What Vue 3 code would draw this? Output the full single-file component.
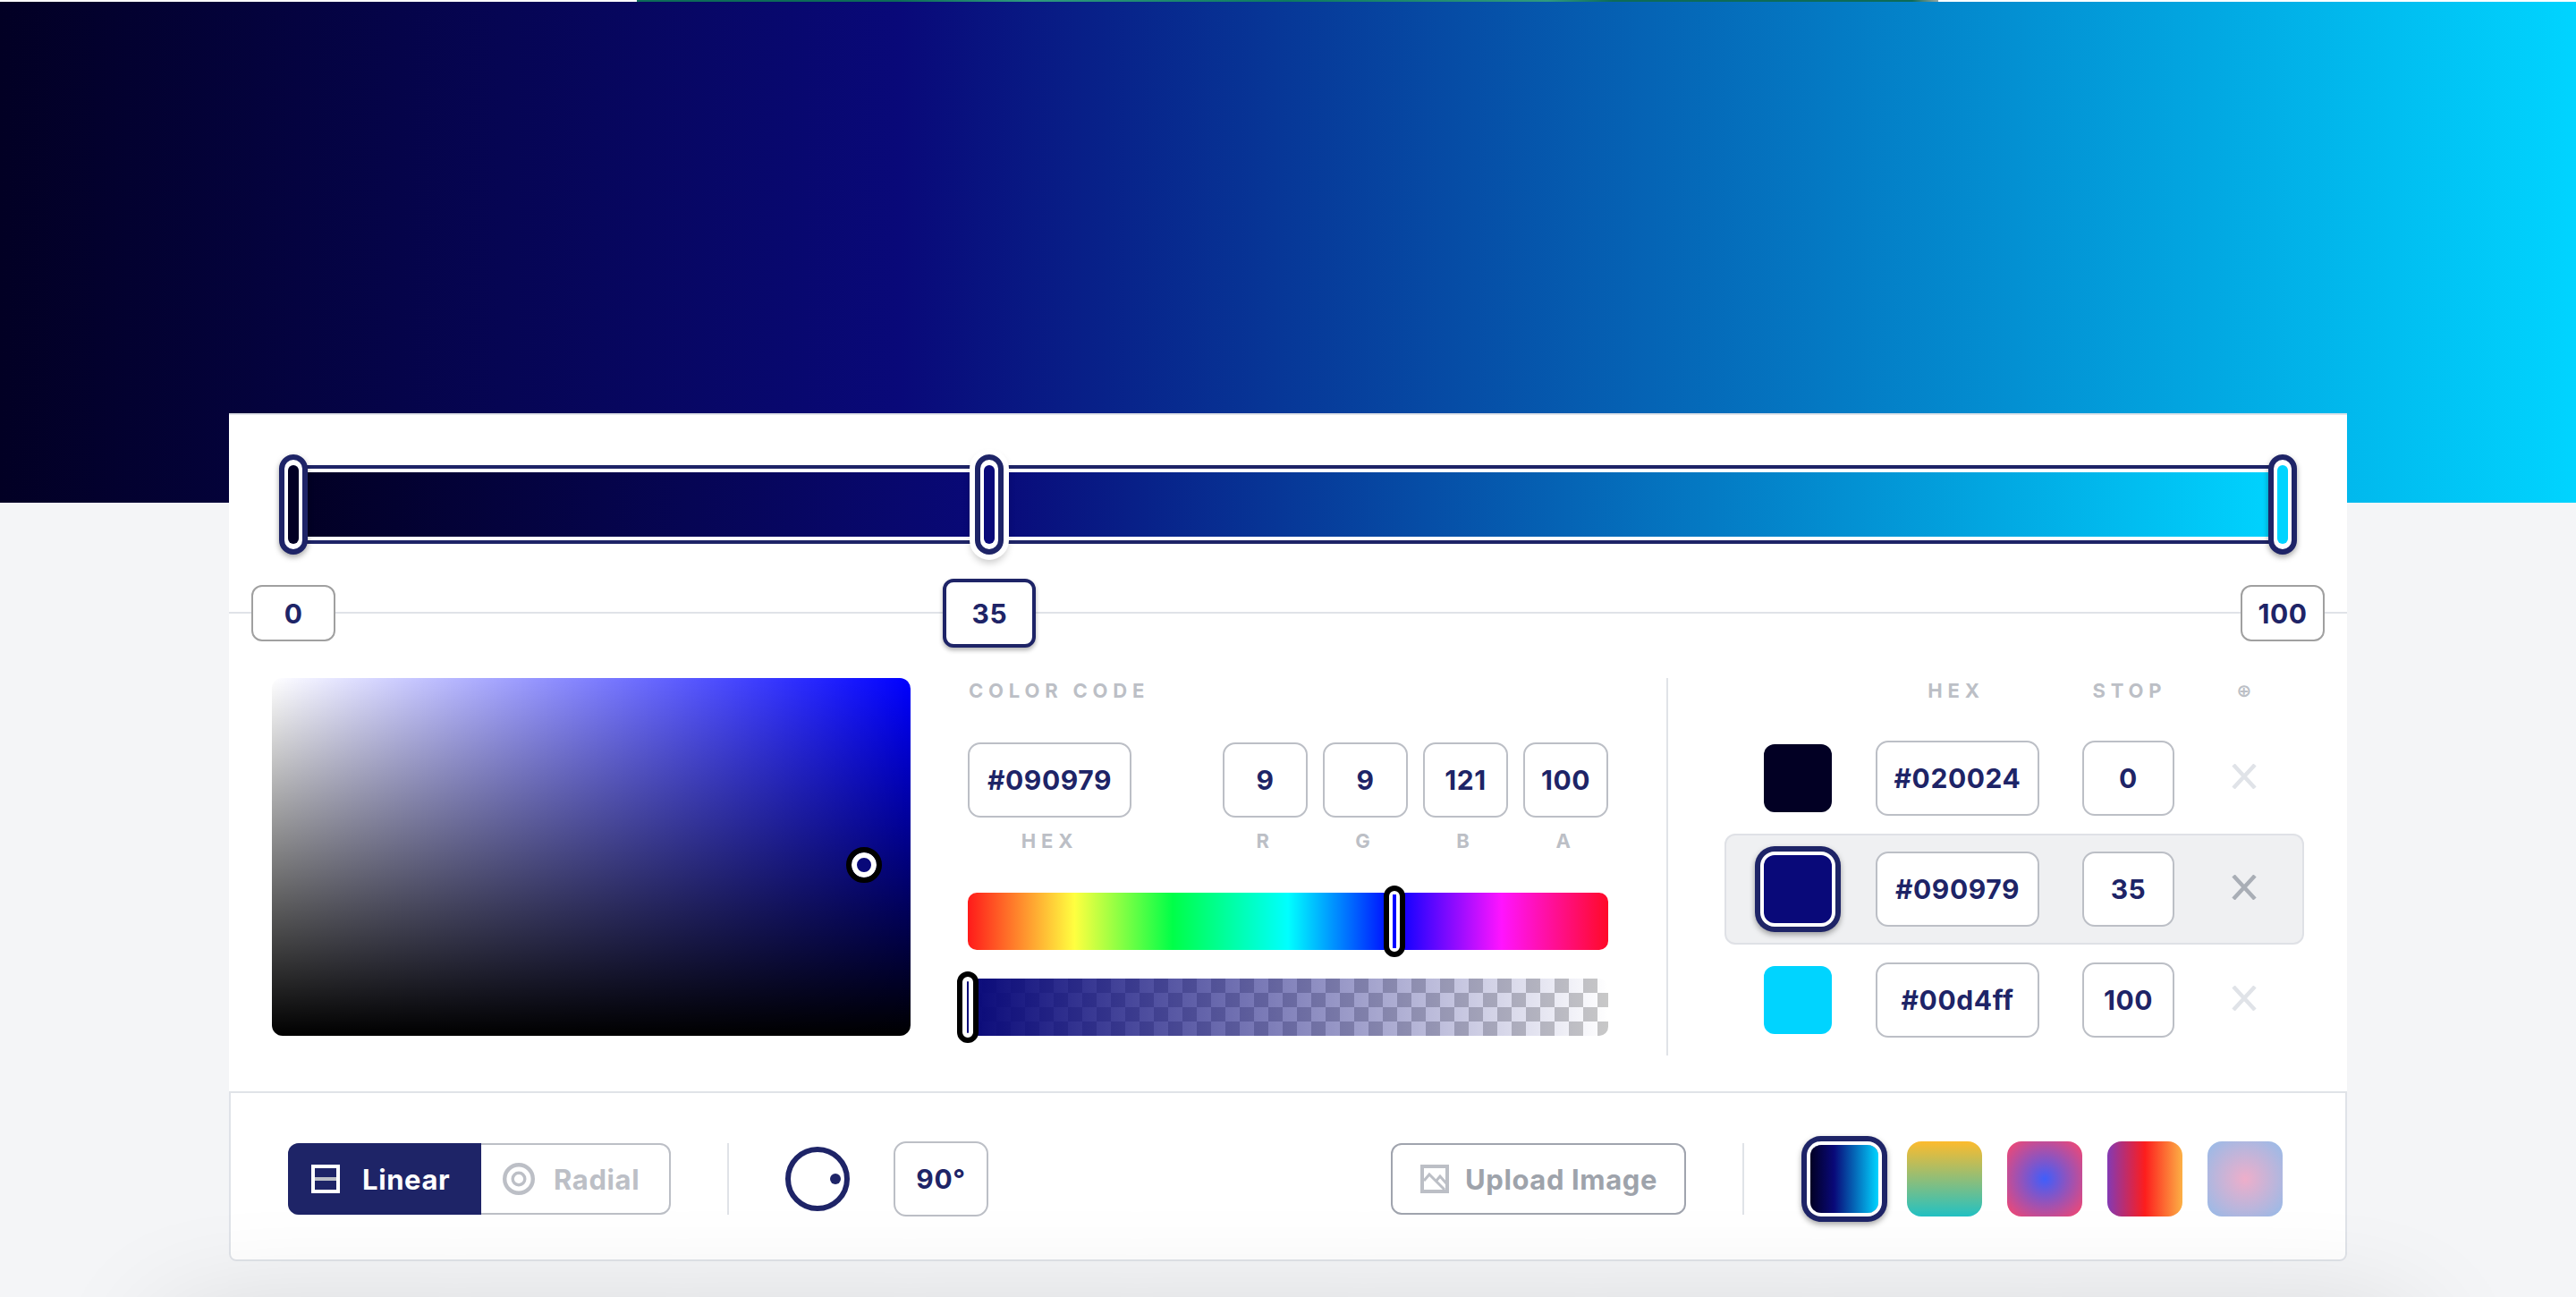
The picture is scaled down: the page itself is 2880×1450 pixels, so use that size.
<script setup>
const stops = [
  { pos: 0, color: '#020024', hex: '#020024', active: false },
  { pos: 35, color: '#090979', hex: '#090979', active: true },
  { pos: 100, color: '#00d4ff', hex: '#00d4ff', active: false }
]
const channels = [
  { label: 'R', value: 9 },
  { label: 'G', value: 9 },
  { label: 'B', value: 121 },
  { label: 'A', value: 100 }
]
const presets = [
  { bg: 'linear-gradient(90deg,#020024 0%,#090979 35%,#00d4ff 100%)', active: true },
  { bg: 'linear-gradient(0deg,#22c1c3 0%,#fdbb2d 100%)', active: false },
  { bg: 'radial-gradient(circle,#3f5efb 0%,#fc466b 100%)', active: false },
  { bg: 'linear-gradient(90deg,#833ab4 0%,#fd1d1d 50%,#fcb045 100%)', active: false },
  { bg: 'radial-gradient(circle,#eeaeca 0%,#94bbe9 100%)', active: false }
]
</script>

<template>
  <div class="page">
    <div class="hero">
      <div class="peek"></div>
    </div>
    <main class="card">
      <section class="track-area">
        <div class="track">
          <span
            v-for="s in stops"
            :key="s.pos"
            class="thumb"
            :class="{ on: s.active }"
            :style="{ left: 'calc(-4px + (100% + 8px) * ' + s.pos / 100 + ')' }"
          ><i :style="{ background: s.color }"></i></span>
        </div>
      </section>

      <section class="ruler">
        <span
          v-for="s in stops"
          :key="s.pos"
          class="chip"
          :class="{ on: s.active }"
          :style="{ left: 'calc(72px + (100% - 144px) * ' + s.pos / 100 + ')' }"
        >{{ s.pos }}</span>
      </section>

      <section class="editor">
        <div class="sv">
          <span class="sv-dot"></span>
        </div>

        <div class="code">
          <div class="label title">COLOR CODE</div>
          <div class="fields">
            <div class="field hex-field">
              <div class="box">#090979</div>
              <div class="label">HEX</div>
            </div>
            <div class="rgba">
              <div v-for="c in channels" :key="c.label" class="field">
                <div class="box num">{{ c.value }}</div>
                <div class="label">{{ c.label }}</div>
              </div>
            </div>
          </div>
          <div class="hue">
            <span class="slide hue-slide"><i></i></span>
          </div>
          <div class="alpha">
            <div class="alpha-fill"></div>
            <span class="slide alpha-slide"><i></i></span>
          </div>
        </div>

        <div class="table">
          <div class="thead">
            <span class="label th-hex">HEX</span>
            <span class="label th-stop">STOP</span>
            <span class="label th-add">⊕</span>
          </div>
          <div v-for="s in stops" :key="s.pos" class="row" :class="{ on: s.active }">
            <span class="swatch" :style="{ background: s.color }"></span>
            <div class="box cell-hex">{{ s.hex }}</div>
            <div class="box cell-stop">{{ s.pos }}</div>
            <svg class="x" viewBox="0 0 28 28" width="28" height="28">
              <path d="M2 1 26 27M26 1 2 27" fill="none" stroke="currentColor" stroke-width="4.5" />
            </svg>
          </div>
        </div>
      </section>

      <footer class="foot">
        <div class="toggle">
          <div class="tab active">
            <svg viewBox="0 0 32 32" width="32" height="32">
              <rect x="2" y="2" width="28" height="28" fill="none" stroke="#fff" stroke-width="4" />
              <rect x="4" y="14" width="24" height="4" fill="#bcbfc6" />
            </svg>
            <span>Linear</span>
          </div>
          <div class="tab">
            <svg viewBox="0 0 36 36" width="36" height="36">
              <circle cx="18" cy="18" r="15.8" fill="none" stroke="#bcbfc6" stroke-width="4.4" />
              <circle cx="18" cy="18" r="6.8" fill="none" stroke="#bcbfc6" stroke-width="3.4" />
            </svg>
            <span>Radial</span>
          </div>
        </div>
        <div class="vline first"></div>
        <div class="dial"><i></i></div>
        <div class="box angle">90°</div>
        <div class="upload">
          <svg viewBox="0 0 32 32" width="32" height="32">
            <rect x="2" y="2" width="28" height="28" fill="none" stroke="#bcbfc6" stroke-width="4" />
            <path d="M4 18 10 11 27 28M17 19 22 13 29 21" fill="none" stroke="#bcbfc6" stroke-width="3" />
          </svg>
          <span>Upload Image</span>
        </div>
        <div class="vline second"></div>
        <div class="presets">
          <span
            v-for="(p, i) in presets"
            :key="i"
            class="preset"
            :class="{ on: p.active }"
            :style="{ background: p.bg }"
          ></span>
        </div>
      </footer>
    </main>
    <div class="next-shadow"></div>
  </div>
</template>

<style>
html, body { margin: 0; background: #f4f5f7; }
</style>

<style scoped>
.page {
  position: relative;
  width: 2880px;
  height: 1450px;
  overflow: hidden;
  background: #f4f5f7;
  font-family: Inter, "Liberation Sans", sans-serif;
  color: #1e2467;
}
.hero {
  position: relative;
  height: 562px;
  background: linear-gradient(90deg, #020024 0%, #090979 35%, #00d4ff 100%);
}
.hero::before {
  content: "";
  display: block;
  height: 2px;
  background: #fff;
}
.peek {
  position: absolute;
  top: 0;
  left: 712px;
  width: 1455px;
  height: 2px;
  background: linear-gradient(90deg, #0d6b58 0%, #0d6b58 20%, #2f9a7f 30%, #0d7a60 50%, #2f9a7f 70%, #0d6b58 75%, #0d6b58 98%, #9aa5a0 100%);
}
.next-shadow {
  position: absolute;
  left: 190px;
  top: 1490px;
  width: 2500px;
  height: 100px;
  box-shadow: 0 0 140px rgba(0, 0, 0, 0.2);
  pointer-events: none;
}
.card {
  position: relative;
  box-sizing: border-box;
  width: 2368px;
  margin: -100px auto 0;
  background: #fff;
  border-top: 2px solid #e0e3e8;
  border-radius: 0 0 8px 8px;
}
.track-area {
  box-sizing: border-box;
  height: 142px;
  padding: 56px 72px 0;
}
.track {
  position: relative;
  box-sizing: border-box;
  height: 88px;
  padding: 4px 0;
  border: 4px solid #1e2467;
  background: linear-gradient(90deg, #020024 0%, #090979 35%, #00d4ff 100%) content-box;
}
.thumb {
  position: absolute;
  top: -16px;
  box-sizing: border-box;
  width: 32px;
  height: 112px;
  margin-left: -16px;
  border: 6px solid #1e2467;
  border-radius: 16px;
  background: #fff;
  box-shadow: 0 3px 6px rgba(0, 0, 0, 0.35);
  display: flex;
  align-items: center;
  justify-content: center;
}
.thumb.on {
  box-shadow: 0 0 0 6px #fff, 0 5px 8px 4px rgba(0, 0, 0, 0.22);
}
.thumb i {
  display: block;
  width: 12px;
  height: 88px;
  border-radius: 6px;
}
.ruler {
  position: relative;
  height: 2px;
  margin-top: 78px;
  background: #e0e3e8;
}
.chip {
  position: absolute;
  top: -30px;
  box-sizing: border-box;
  min-width: 94px;
  height: 63px;
  padding: 0 12px;
  transform: translateX(-50%);
  border: 2px solid #a0a0a0;
  border-radius: 12px;
  background: #fff;
  font-size: 30px;
  font-weight: 700;
  letter-spacing: 0.5px;
  display: flex;
  align-items: center;
  justify-content: center;
}
.chip.on {
  top: -37px;
  width: 104px;
  height: 77px;
  border: 4px solid #1e2467;
  box-shadow: 0 3px 5px rgba(0, 0, 0, 0.3);
}
.editor {
  display: flex;
  height: 422px;
  margin-top: 72px;
  padding-left: 48px;
}
.sv {
  position: relative;
  flex: none;
  width: 714px;
  height: 400px;
  border-radius: 12px;
  background:
    linear-gradient(to top, #000, rgba(0, 0, 0, 0)),
    linear-gradient(to right, #fff, rgba(255, 255, 255, 0)),
    #0000ff;
}
.sv-dot {
  position: absolute;
  left: 642px;
  top: 189px;
  box-sizing: border-box;
  width: 40px;
  height: 40px;
  border-radius: 50%;
  background: #090979;
  border: 6px solid #000;
  box-shadow: inset 0 0 0 6px #fff;
}
.label {
  font-size: 22px;
  line-height: 28px;
  font-weight: 700;
  letter-spacing: 5.8px;
  color: #bcbfc6;
  text-align: center;
}
.box {
  box-sizing: border-box;
  height: 84px;
  border: 2px solid #bcbfc6;
  border-radius: 14px;
  background: #fff;
  font-size: 30px;
  font-weight: 700;
  letter-spacing: 0.6px;
  color: #1e2467;
  display: flex;
  align-items: center;
  justify-content: center;
}
.code {
  flex: none;
  width: 716px;
  margin-left: 64px;
}
.title {
  text-align: left;
  height: 72px;
  margin-left: 1px;
}
.fields {
  display: flex;
  justify-content: space-between;
  height: 168px;
}
.hex-field {
  width: 183px;
}
.field .label {
  margin-top: 12px;
}
.rgba {
  display: flex;
  gap: 17px;
}
.rgba .field {
  width: 95px;
}
.hue {
  position: relative;
  height: 64px;
  border-radius: 10px;
  background: linear-gradient(90deg, #ff1a1a 0%, #ffff40 16.67%, #00ff48 32%, #00ffff 50%, #0000ff 66.67%, #ff14ff 83.33%, #ff0a28 100%);
}
.alpha {
  position: relative;
  height: 64px;
  margin-top: 32px;
  border-radius: 10px;
  background: repeating-conic-gradient(#c8c8c8 0 25%, #fff 0 50%) 0 0 / 32px 32px;
}
.alpha-fill {
  height: 100%;
  border-radius: 10px;
  background: linear-gradient(90deg, #090979, rgba(9, 9, 121, 0));
}
.slide {
  position: absolute;
  top: -8px;
  box-sizing: border-box;
  width: 24px;
  height: 80px;
  margin-left: -12px;
  border: 6px solid #000;
  border-radius: 12px;
  background: #fff;
  display: flex;
  align-items: center;
  justify-content: center;
}
.hue-slide { left: 66.67%; }
.alpha-slide { left: 0; }
.hue-slide i {
  display: block;
  width: 4px;
  height: 60px;
  background: #0000ff;
}
.alpha-slide i {
  display: block;
  width: 2px;
  height: 58px;
  border-radius: 2px;
  background: #090979;
}
.table {
  flex: 1;
  margin-left: 65px;
  padding-left: 2px;
  border-left: 2px solid #e0e3e8;
}
.thead {
  position: relative;
  height: 50px;
}
.thead .label {
  position: absolute;
  top: 0;
  transform: translateX(-50%);
}
.th-hex { left: 320px; }
.th-stop { left: 514px; }
.th-add {
  left: 642px;
  font-family: "DejaVu Sans", sans-serif;
  font-size: 20px;
  letter-spacing: 0;
  font-weight: 700;
}
.row {
  box-sizing: border-box;
  display: flex;
  align-items: center;
  width: 648px;
  height: 124px;
  margin-left: 61px;
  color: #e0e3e8;
  border: 2px solid transparent;
  border-radius: 12px;
}
.row.on {
  background: #eff0f2;
  border-color: #dfe1e6;
  color: #a9aeb6;
}
.swatch {
  flex: none;
  width: 76px;
  height: 76px;
  margin-left: 42px;
  border-radius: 12px;
}
.row.on .swatch {
  box-shadow: 0 0 0 4px #fff, 0 0 0 10px #1e2467, 0 3px 6px 10px rgba(0, 0, 0, 0.35);
}
.cell-hex {
  flex: none;
  width: 183px;
  margin-left: 49px;
}
.cell-stop {
  flex: none;
  width: 103px;
  margin-left: 48px;
}
.x {
  flex: none;
  margin-left: 64px;
  margin-top: -4px;
}
.foot {
  box-sizing: border-box;
  height: 190px;
  margin-top: 40px;
  padding: 6px 0 0 64px;
  display: flex;
  align-items: center;
  border: 2px solid #e0e3e8;
  border-radius: 0 0 8px 8px;
  background: #fff;
}
.toggle {
  display: flex;
  box-sizing: border-box;
  width: 428px;
  height: 80px;
  border: 2px solid #bcbfc6;
  border-radius: 12px;
}
.tab {
  flex: 1;
  display: flex;
  align-items: center;
  gap: 21px;
  padding-left: 24px;
  font-size: 31px;
  font-weight: 700;
  letter-spacing: 0.6px;
  color: #bcbfc6;
}
.tab.active {
  flex: none;
  box-sizing: border-box;
  width: 216px;
  margin: -2px 0 -2px -2px;
  padding-left: 26px;
  gap: 25px;
  border-radius: 12px 0 0 12px;
  background: #1e2467;
  color: #fff;
}
.vline {
  flex: none;
  width: 2px;
  height: 80px;
  background: #e0e3e8;
}
.vline.first { margin-left: 63px; }
.dial {
  position: relative;
  flex: none;
  box-sizing: border-box;
  width: 72px;
  height: 72px;
  margin-left: 63px;
  border: 6px solid #1e2467;
  border-radius: 50%;
}
.dial i {
  position: absolute;
  left: 44px;
  top: 24px;
  width: 12px;
  height: 12px;
  border-radius: 50%;
  background: #1e2467;
}
.angle {
  flex: none;
  width: 106px;
  margin-left: 49px;
}
.upload {
  flex: none;
  box-sizing: border-box;
  display: flex;
  align-items: center;
  gap: 18px;
  width: 330px;
  height: 80px;
  margin-left: 450px;
  padding-left: 31px;
  border: 2px solid #a0a4ae;
  border-radius: 12px;
  font-size: 31px;
  font-weight: 700;
  letter-spacing: 0.6px;
  color: #9ea3ab;
}
.vline.second { margin-left: 63px; }
.presets {
  display: flex;
  gap: 28px;
  margin-left: 70px;
}
.preset {
  display: block;
  flex: none;
  width: 84px;
  height: 84px;
  border-radius: 16px;
}
.preset.on {
  width: 76px;
  height: 76px;
  margin: 4px;
  border-radius: 12px;
  box-shadow: 0 0 0 4px #fff, 0 0 0 10px #1e2467, 0 3px 6px 10px rgba(0, 0, 0, 0.35);
}
</style>
